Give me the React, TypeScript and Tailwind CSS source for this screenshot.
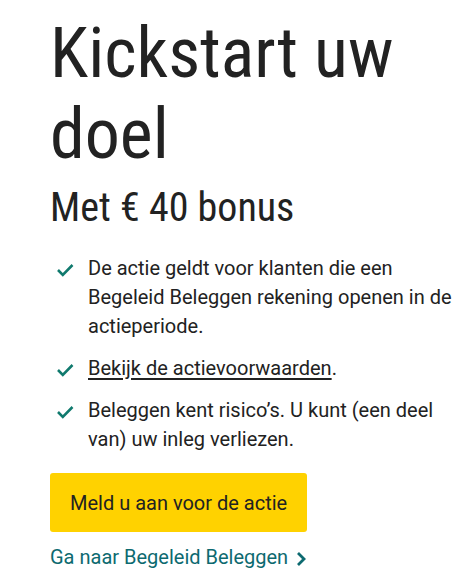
const points = [
  { text: 'De actie geldt voor klanten die een Begeleid Beleggen rekening openen in de actieperiode.' },
  { link: 'Bekijk de actievoorwaarden', text: '.' },
  { text: 'Beleggen kent risico’s. U kunt (een deel van) uw inleg verliezen.' },
];

function Check() {
  return (
    <svg width="18" height="14" viewBox="0 0 18 14" className="shrink-0 mt-[9px]" fill="none">
      <path d="M2 7l4.8 4.8L16.5 2" stroke="#107a6e" strokeWidth="2.6" />
    </svg>
  );
}

export default function App() {
  return (
    <div className="min-h-[580px] bg-white pl-[50px] pr-[18px] pt-[13px] text-[#222222] font-['Roboto',sans-serif]">
      <h1 className="text-[70px] leading-[81px] [font-stretch:condensed] font-normal">Kickstart uw doel</h1>
      <h2 className="mt-[9px] text-[40px] leading-[48px] [font-stretch:condensed] font-normal">Met € 40 bonus</h2>

      <ul className="mt-[22px] flex flex-col gap-[13px]">
        {points.map((p, i) => (
          <li key={i} className="flex gap-[14px] pl-[6px]">
            <Check />
            <p className="text-[20px] leading-[29px]">
              {p.link && <a className="underline underline-offset-[3px]">{p.link}</a>}
              {p.text}
            </p>
          </li>
        ))}
      </ul>

      <button className="mt-[19px] h-[59px] w-[257px] rounded-[3px] bg-[#ffd200] pl-[20px] text-left text-[20px] text-[#222222]">
        Meld u aan voor de actie
      </button>

      <a className="mt-[11px] flex items-center gap-[8px] text-[20px] leading-[29px] text-[#0d6a70]">
        Ga naar Begeleid Beleggen
        <svg width="10" height="16" viewBox="0 0 10 16" fill="none" className="mt-[2px]">
          <path d="M2 2l6 6-6 6" stroke="#0d6a70" strokeWidth="2.8" />
        </svg>
      </a>
    </div>
  );
}
